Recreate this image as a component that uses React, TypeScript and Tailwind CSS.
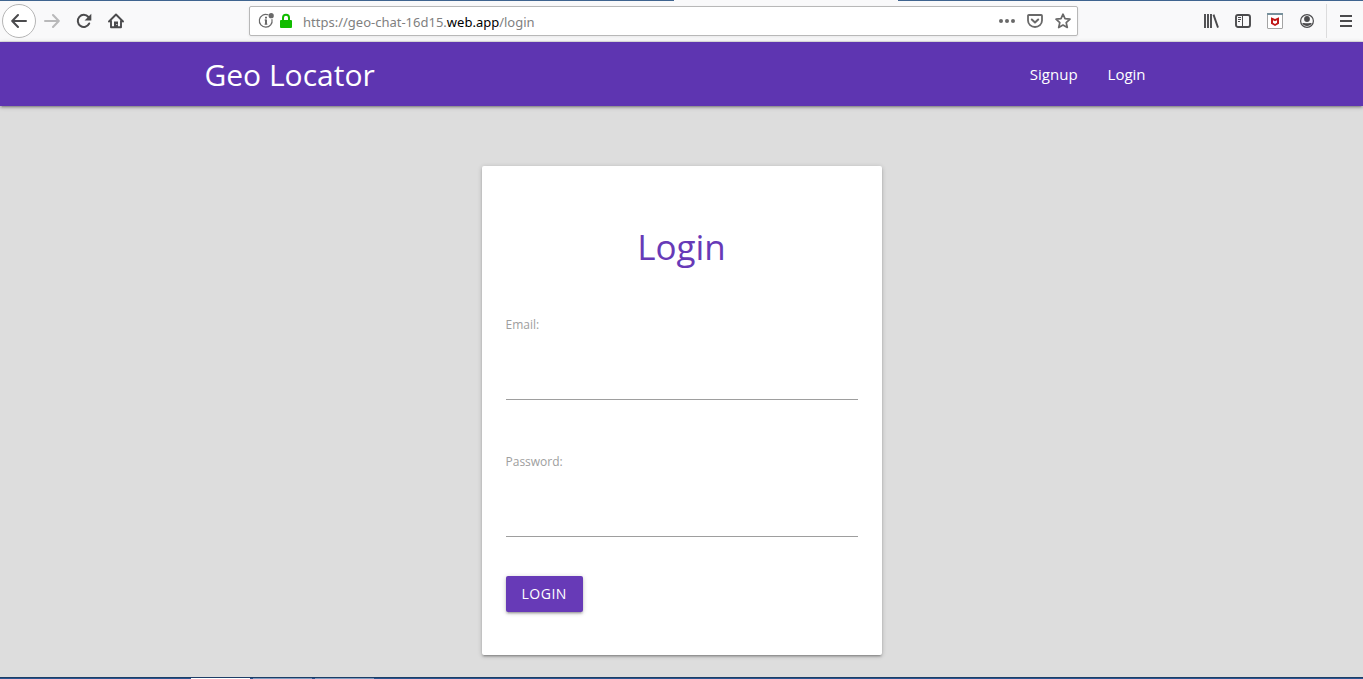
import React from "react";

type IconProps = { children: React.ReactNode; className?: string };

function Icon({ children, className = "" }: IconProps) {
  return (
    <svg
      aria-hidden="true"
      viewBox="0 0 16 16"
      className={`size-4 shrink-0 ${className}`}
      fill="none"
      stroke="currentColor"
      strokeWidth="2"
      strokeLinecap="round"
      strokeLinejoin="round"
    >
      {children}
    </svg>
  );
}

function ToolButton({ label, children, className = "" }: { label: string; children: React.ReactNode; className?: string }) {
  return (
    <button type="button" aria-label={label} className={`flex h-8 w-8 shrink-0 items-center justify-center ${className}`}>
      {children}
    </button>
  );
}

function AddressBar() {
  return (
    <div className="mr-auto ml-[117px] flex h-[30px] min-w-0 basis-[829px] items-center rounded-[2px] border border-[#b8b8b8] bg-white pl-2 text-[#696969] shadow-[0_1px_3px_rgba(0,0,0,0.08)]">
      <button type="button" aria-label="Site information" className="flex w-5 shrink-0 items-center">
        <Icon>
          <path d="M10 1.800A6.400 6.400 0 1 0 14 6.500" strokeWidth="1.200" />
          <path d="M8 6.500V11.500" strokeWidth="2" strokeLinecap="butt" />
          <path d="M6.500 7H8M6.500 11.200h3" strokeWidth=".8" strokeLinecap="butt" />
          <path d="M7 3.800h2v1.700H7Z" fill="currentColor" stroke="none" />
          <circle cx="13.200" cy="2.700" r="2.600" fill="currentColor" stroke="none" />
        </Icon>
      </button>
      <button type="button" aria-label="Secure connection" className="flex w-4 shrink-0 items-center text-[#12bc00]">
        <Icon>
          <path d="M5 7V4.800a3 3 0 0 1 6 0V7" strokeLinecap="butt" />
          <rect x="2" y="7" width="12" height="8" rx="1" fill="currentColor" stroke="none" />
        </Icon>
      </button>
      <div className="relative ml-[9px] flex h-full min-w-0 flex-1 items-center pt-[3px] font-['Noto_Sans',sans-serif] text-[13px] text-[#808080]">
        <input
          type="text"
          aria-label="Address"
          className="peer absolute inset-0 w-full bg-transparent outline-none focus:bg-white"
        />
        <span className="pointer-events-none truncate peer-focus:hidden">
          https://geo-chat-16d15.<span className="text-black">web.app</span>/login
        </span>
      </div>
      <button type="button" aria-label="Page actions" className="flex h-7 w-7 shrink-0 items-center justify-center">
        <Icon>
          <g fill="currentColor" stroke="none">
            <circle cx="2" cy="8" r="2" />
            <circle cx="8" cy="8" r="2" />
            <circle cx="14" cy="8" r="2" />
          </g>
        </Icon>
      </button>
      <button type="button" aria-label="Save to Pocket" className="flex h-7 w-7 shrink-0 items-center justify-center">
        <Icon>
          <path d="M1.800 2h12.400a.8.800 0 0 1 .8.800V7.500a7 6.500 0 0 1-14 0V2.800a.8.800 0 0 1 .8-.8Z" strokeWidth="1.800" />
          <path d="m4.800 6.500 3.200 3 3.200-3" />
        </Icon>
      </button>
      <button type="button" aria-label="Bookmark this page" className="flex h-7 w-7 shrink-0 items-center justify-center">
        <Icon>
          <path d="m8 1.200 2 4.500 5 .5-3.800 3.400 1.100 4.900L8 12l-4.300 2.500 1.100-4.900L1 6.200l5-.5Z" strokeWidth="1.700" />
        </Icon>
      </button>
    </div>
  );
}

function BrowserToolbar() {
  return (
    <header className="bg-[#f9f9fa] text-[#4b4b4d]">
      <div className="flex h-px bg-[#3f648f]">
        <span className="ml-[49.450%] w-[16.440%] bg-[#f9f9fa]" />
      </div>
      <div className="flex h-[41px] items-center border-b border-[#e0e0e1] pl-[2px]">
        <button
          type="button"
          aria-label="Back"
          className="flex size-[34px] shrink-0 items-center justify-center rounded-full border border-[#b5b5b5] bg-white"
        >
          <Icon>
            <path d="M15 8H1.500M7 2 1.200 8 7 14" />
          </Icon>
        </button>
        <ToolButton label="Forward" className="text-[#b9b9ba]">
          <Icon>
            <path d="M1 8h13.500M9 2l5.800 6L9 14" />
          </Icon>
        </ToolButton>
        <ToolButton label="Reload">
          <Icon>
            <path d="M13.200 10.500A6 6 0 1 1 12.400 4" />
            <path d="M15.300.8v6.700H8.600Z" fill="currentColor" stroke="none" />
          </Icon>
        </ToolButton>
        <ToolButton label="Home">
          <Icon>
            <path d="M1 8.500 8 1.500l7 7M3 8v6.300h10V8" strokeWidth="1.900" />
            <path d="M6 14V8.500h4V14Z" fill="currentColor" stroke="none" />
            <circle cx="8.800" cy="11.500" r=".6" fill="#f9f9fa" stroke="none" />
          </Icon>
        </ToolButton>
        <AddressBar />
        <div className="flex shrink-0 items-center">
          <ToolButton label="Library">
            <Icon>
              <path d="M2 1v14M5 1v14M8 1v14M10.500 1.600l4.500 13" strokeWidth="1.900" strokeLinecap="butt" />
            </Icon>
          </ToolButton>
          <ToolButton label="Sidebars">
            <Icon>
              <rect x="1" y="2" width="14" height="12" rx="2" strokeWidth="1.900" />
              <path d="M7.500 2v12" strokeWidth="1" />
              <path d="M3 4.500h3M3 6.500h3M3 8.500h2" strokeWidth="1" strokeLinecap="butt" />
            </Icon>
          </ToolButton>
          <ToolButton label="McAfee WebAdvisor">
            <Icon>
              <rect x=".5" y=".5" width="15" height="15" rx=".5" fill="#fff" stroke="#a4a4a4" strokeWidth="1" />
              <path d="M0 1h16" stroke="#76909c" strokeLinecap="butt" />
              <path d="M4 4.200 8 6l4-1.800v6.500L8 13l-4-2.300Z" fill="#c01818" stroke="none" />
              <path d="M6 7.200 8 8.200l2-1v2.600L8 11 6 9.800Z" fill="#fff" stroke="none" />
            </Icon>
          </ToolButton>
          <ToolButton label="Account">
            <Icon>
              <circle cx="8" cy="8" r="6.400" strokeWidth="1.200" />
              <circle cx="8" cy="6" r="2.900" fill="currentColor" stroke="none" />
              <path d="M3.200 10.200C5 9.500 5.500 10.300 8 10.300s3-.8 4.800-.1C11.800 12 10.200 13 8 13s-3.800-1-4.800-2.800Z" fill="currentColor" stroke="none" />
            </Icon>
          </ToolButton>
          <span className="ml-[3px] h-[34px] w-px bg-[#dcdcdd]" />
          <ToolButton label="Menu" className="ml-1">
            <Icon>
              <path d="M1 3h12M1 8h12M1 13h12" strokeWidth="1.800" strokeLinecap="butt" />
            </Icon>
          </ToolButton>
        </div>
      </div>
    </header>
  );
}

function SiteNav() {
  return (
    <nav className="relative h-16 bg-[#5e35b1] text-white shadow-[0_2px_2px_0_rgba(0,0,0,0.14),0_3px_1px_-2px_rgba(0,0,0,0.12),0_1px_5px_0_rgba(0,0,0,0.2)]">
      <div className="mx-auto flex h-full w-[70%] items-center justify-between">
        <a href="#home" className="pt-[2px] text-[30px] leading-[62px]">
          Geo Locator
        </a>
        <ul className="flex text-[15px] leading-[64px]">
          <li>
            <a href="#signup" className="block px-[15px]">
              Signup
            </a>
          </li>
          <li>
            <a href="#login" className="block pr-[13px] pl-[15px]">
              Login
            </a>
          </li>
        </ul>
      </div>
    </nav>
  );
}

function Field({ id, label, type }: { id: string; label: string; type: string }) {
  return (
    <div className="flex flex-col gap-5">
      <label htmlFor={id} className="text-xs leading-[18px] text-[#9e9e9e]">
        {label}
      </label>
      <input id={id} type={type} className="h-[46px] w-full border-b border-[#9e9e9e] bg-transparent text-base outline-none" />
    </div>
  );
}

export default function App() {
  return (
    <div className="flex min-h-screen flex-col bg-[#dddddd] font-['Open_Sans','Noto_Sans',sans-serif]">
      <BrowserToolbar />
      <SiteNav />
      <main className="flex-1 px-4 pt-[60px] pb-[22px]">
        <form
          onSubmit={(e) => e.preventDefault()}
          className="mx-auto max-w-[400px] rounded-[2px] bg-white px-6 pt-[59px] pb-[43px] shadow-[0_2px_2px_0_rgba(0,0,0,0.14),0_3px_1px_-2px_rgba(0,0,0,0.12),0_1px_5px_0_rgba(0,0,0,0.2)]"
        >
          <h2 className="text-center text-[35px] leading-[44px] text-[#673ab7]">Login</h2>
          <div className="mt-[47px] flex flex-col gap-[53px]">
            <Field id="email" label="Email:" type="email" />
            <Field id="password" label="Password:" type="password" />
          </div>
          <button
            type="submit"
            className="mt-[39px] block h-9 rounded-[2px] bg-[#673ab7] px-4 text-sm tracking-[0.5px] text-white uppercase shadow-[0_2px_2px_0_rgba(0,0,0,0.14),0_3px_1px_-2px_rgba(0,0,0,0.12),0_1px_5px_0_rgba(0,0,0,0.2)]"
          >
            Login
          </button>
        </form>
      </main>
      <footer className="flex h-[2px] border-t border-[#1d3d66] bg-[#2a5590]">
        <span className="ml-[14%] w-[59px] bg-white" />
        <span className="ml-[3px] w-[59px] bg-[#7f9cc0]" />
        <span className="ml-[3px] w-[59px] bg-[#7f9cc0]" />
      </footer>
    </div>
  );
}
